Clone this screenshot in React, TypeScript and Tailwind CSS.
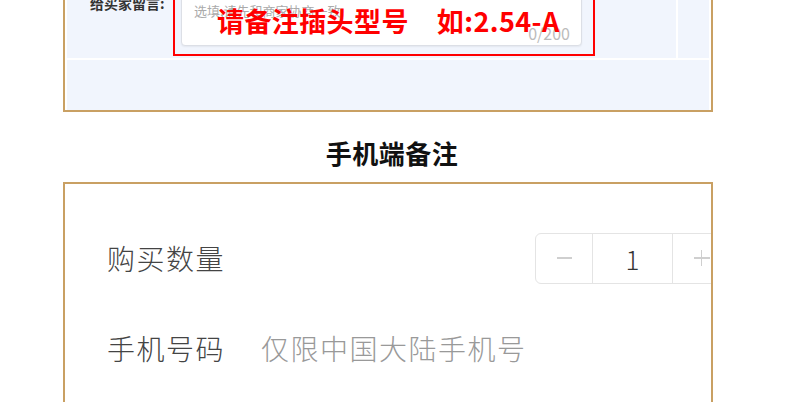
import React from 'react';

const gold = 'border-[#c9a063]';

const PcNote = () => (
  <div className={`ml-[63px] w-[650px] h-[112px] border-x-2 border-b-2 ${gold} pl-[2px] pr-[2px] overflow-hidden`}>
    <div className="h-full bg-[#f1f5fd] flex flex-col">
      <div className="relative h-[58px] flex items-start pl-[23px]">
        <div className="w-[83px] -mt-[7px] text-[14px] leading-[20px] font-bold text-[#333]">给买家留言:</div>
        <div className="relative w-[422px] h-[86px] -mt-[30px] border-2 border-[#ff0000] pt-[6px] pl-[6px] pr-[11px] pb-[8px]">
          <div className="relative h-full bg-white border border-[#dcdfe6] rounded-[4px] shadow-[0_1px_2px_rgba(0,0,0,0.06)]">
            <div className="absolute left-[12px] top-[24px] text-[13px] leading-[16px] text-[#aaa]">选填,请先和商家协商一致</div>
            <div className="absolute right-[11px] bottom-[3px] text-[16px] leading-[18px] text-[#bbb]">0/200</div>
          </div>
          <div className="absolute left-[42px] top-[34px] flex text-[27px] leading-[30px] font-bold text-[#ff0000] whitespace-nowrap tracking-[0.4px]">
            <span>请备注插头型号</span>
            <span className="ml-[28px]">如:2.54-A</span>
          </div>
        </div>
        <div className="ml-[81px] w-[2px] h-full bg-white" />
      </div>
      <div className="h-[2px] bg-white" />
      <div className="flex-1" />
    </div>
  </div>
);

const Stepper = () => (
  <div className="flex h-[51px] border border-[#e4e4e4] rounded-[6px] shrink-0">
    <div className="w-[56px] flex items-center justify-center">
      <div className="w-[15px] h-[1.5px] bg-[#cfcfcf]" />
    </div>
    <div className="w-[81px] flex items-center justify-center border-x border-[#e4e4e4] text-[26px] font-light text-[#333]">1</div>
    <div className="w-[57px] relative flex items-center justify-center">
      <div className="w-[16px] h-[1.5px] bg-[#cfcfcf]" />
      <div className="absolute w-[1.5px] h-[16px] bg-[#cfcfcf]" />
    </div>
  </div>
);

const MobileNote = () => (
  <div className={`ml-[63px] w-[650px] h-[230px] border-2 border-b-0 ${gold} overflow-hidden bg-white`}>
    <div className="mt-[49px] h-[50px] flex items-center pl-[42px]">
      <div className="w-[428px] shrink-0 text-[28px] font-light tracking-[1.5px] text-[#444]">购买数量</div>
      <Stepper />
    </div>
    <div className="mt-[40px] h-[50px] flex items-center pl-[42px]">
      <div className="text-[28px] font-light tracking-[1.5px] text-[#444]">手机号码</div>
      <div className="ml-[36px] text-[28px] font-light tracking-[1.5px] text-[#999]">仅限中国大陆手机号</div>
    </div>
  </div>
);

export default function App() {
  return (
    <div className="w-[790px] h-[402px] overflow-hidden bg-white font-['Noto_Sans_CJK_SC','Noto_Sans',sans-serif]">
      <PcNote />
      <div className="h-[70px] pt-[27px] pr-[6px] text-center text-[26px] leading-[27px] font-bold text-[#111] tracking-[0.5px]">
        手机端备注
      </div>
      <MobileNote />
    </div>
  );
}
